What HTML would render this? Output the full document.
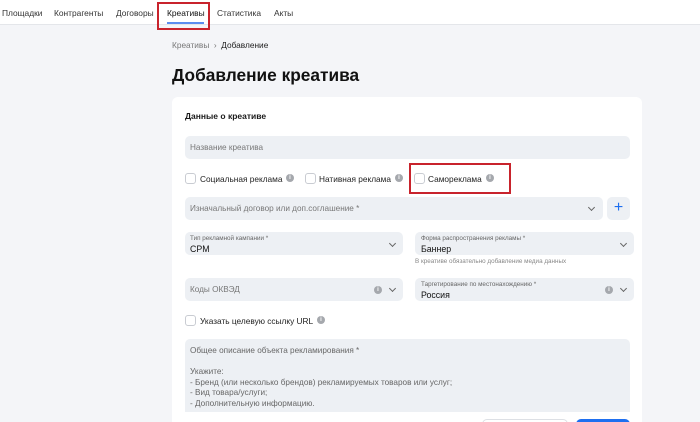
<!DOCTYPE html>
<html><head><meta charset="utf-8"><style>
*{box-sizing:border-box;margin:0;padding:0}
html,body{width:700px;height:422px;overflow:hidden}
body{background:#f4f5f8;font-family:"Liberation Sans","Noto Sans CJK SC",sans-serif;color:#1a1a1a;position:relative}
.a{position:absolute;white-space:nowrap}
.nav{left:0;top:0;width:700px;height:25px;background:#fff;border-bottom:1px solid #e4e6ea}
.nav span{position:absolute;top:8px;font-size:8.4px;color:#333}
.card{left:172px;top:97px;width:470px;height:325px;background:#fff;border-radius:6px 6px 0 0}
.f{background:#edf0f4;border-radius:5px}
.ph{font-size:8.2px;color:#777}
.cb{width:11px;height:11px;border:1px solid #c9ccd2;border-radius:3px;background:#fff}
.lbl{font-size:8.3px;color:#222}
.i{width:8px;height:8px;border-radius:50%;background:#a5a8ad;color:#fff;font-size:6px;text-align:center;line-height:8px;font-weight:bold}
.sm{font-size:6.3px;color:#666}
.v{font-size:8.8px;color:#111}
.chev{width:5px;height:5px;border-right:1.2px solid #666;border-bottom:1.2px solid #666;transform:rotate(45deg)}
</style></head><body>
<div class="a nav">
<span style="left:2px">Площадки</span><span style="left:54px">Контрагенты</span><span style="left:116px">Договоры</span><span style="left:167px;color:#111">Креативы</span><span style="left:217px">Статистика</span><span style="left:274px">Акты</span>
<div class="a" style="left:167px;top:22px;width:37px;height:2px;background:#5b8def"></div>
</div>
<div class="a" style="left:157px;top:2px;width:53px;height:28px;border:2px solid #c8232c"></div>
<div class="a" style="left:172px;top:40px;font-size:8.3px;color:#777">Креативы &nbsp;›&nbsp; <span style="color:#222">Добавление</span></div>
<div class="a" style="left:172px;top:65px;font-size:17.3px;font-weight:bold;color:#111">Добавление креатива</div>
<div class="a card"></div>
<div class="a" style="left:185px;top:111px;font-size:8.5px;font-weight:bold">Данные о креативе</div>
<div class="a f" style="left:185px;top:136px;width:445px;height:23px"></div>
<div class="a ph" style="left:190px;top:143px">Название креатива</div>
<div class="a cb" style="left:185px;top:173px"></div><div class="a lbl" style="left:200px;top:174px">Социальная реклама</div><div class="a i" style="left:286px;top:174px">i</div>
<div class="a cb" style="left:305px;top:173px"></div><div class="a lbl" style="left:319px;top:174px">Нативная реклама</div><div class="a i" style="left:395px;top:174px">i</div>
<div class="a cb" style="left:414px;top:173px"></div><div class="a lbl" style="left:428px;top:174px">Самореклама</div><div class="a i" style="left:486px;top:174px">i</div>
<div class="a" style="left:409px;top:163px;width:102px;height:31px;border:2px solid #c8232c"></div>
<div class="a f" style="left:185px;top:197px;width:418px;height:23px"></div>
<div class="a ph" style="left:190px;top:204px">Изначальный договор или доп.соглашение *</div>
<div class="a chev" style="left:589px;top:205px"></div>
<div class="a f" style="left:607px;top:197px;width:23px;height:23px;color:#1e6ff0;font-size:16px;text-align:center;line-height:22px">+</div>
<div class="a f" style="left:185px;top:232px;width:218px;height:23px"></div>
<div class="a sm" style="left:190px;top:235px">Тип рекламной кампании *</div><div class="a v" style="left:190px;top:244px">CPM</div><div class="a chev" style="left:390px;top:241px"></div>
<div class="a f" style="left:415px;top:232px;width:219px;height:23px"></div>
<div class="a sm" style="left:421px;top:235px">Форма распространения рекламы *</div><div class="a v" style="left:421px;top:244px">Баннер</div><div class="a chev" style="left:621px;top:241px"></div>
<div class="a sm" style="left:415px;top:258px;color:#888">В креативе обязательно добавление медиа данных</div>
<div class="a f" style="left:185px;top:278px;width:218px;height:23px"></div>
<div class="a ph" style="left:190px;top:285px">Коды ОКВЭД</div><div class="a i" style="left:374px;top:286px">i</div><div class="a chev" style="left:390px;top:286px"></div>
<div class="a f" style="left:415px;top:278px;width:219px;height:23px"></div>
<div class="a sm" style="left:421px;top:281px">Таргетирование по местонахождению *</div><div class="a v" style="left:421px;top:290px">Россия</div><div class="a i" style="left:605px;top:286px">i</div><div class="a chev" style="left:621px;top:286px"></div>
<div class="a cb" style="left:185px;top:315px"></div><div class="a lbl" style="left:200px;top:316px">Указать целевую ссылку URL</div><div class="a i" style="left:317px;top:316px">i</div>
<div class="a f" style="left:185px;top:339px;width:445px;height:73px;border-radius:5px 5px 0 0"></div>
<div class="a ph" style="left:190px;top:346px;line-height:10.5px;color:#666">Общее описание объекта рекламирования *<br><br>Укажите:<br>- Бренд (или несколько брендов) рекламируемых товаров или услуг;<br>- Вид товара/услуги;<br>- Дополнительную информацию.</div>
<div class="a" style="left:482px;top:419px;width:86px;height:10px;border:1px solid #dde0e5;border-radius:5px;background:#fff"></div>
<div class="a" style="left:576px;top:419px;width:54px;height:10px;border-radius:5px;background:#1e6ff0"></div>
</body></html>
